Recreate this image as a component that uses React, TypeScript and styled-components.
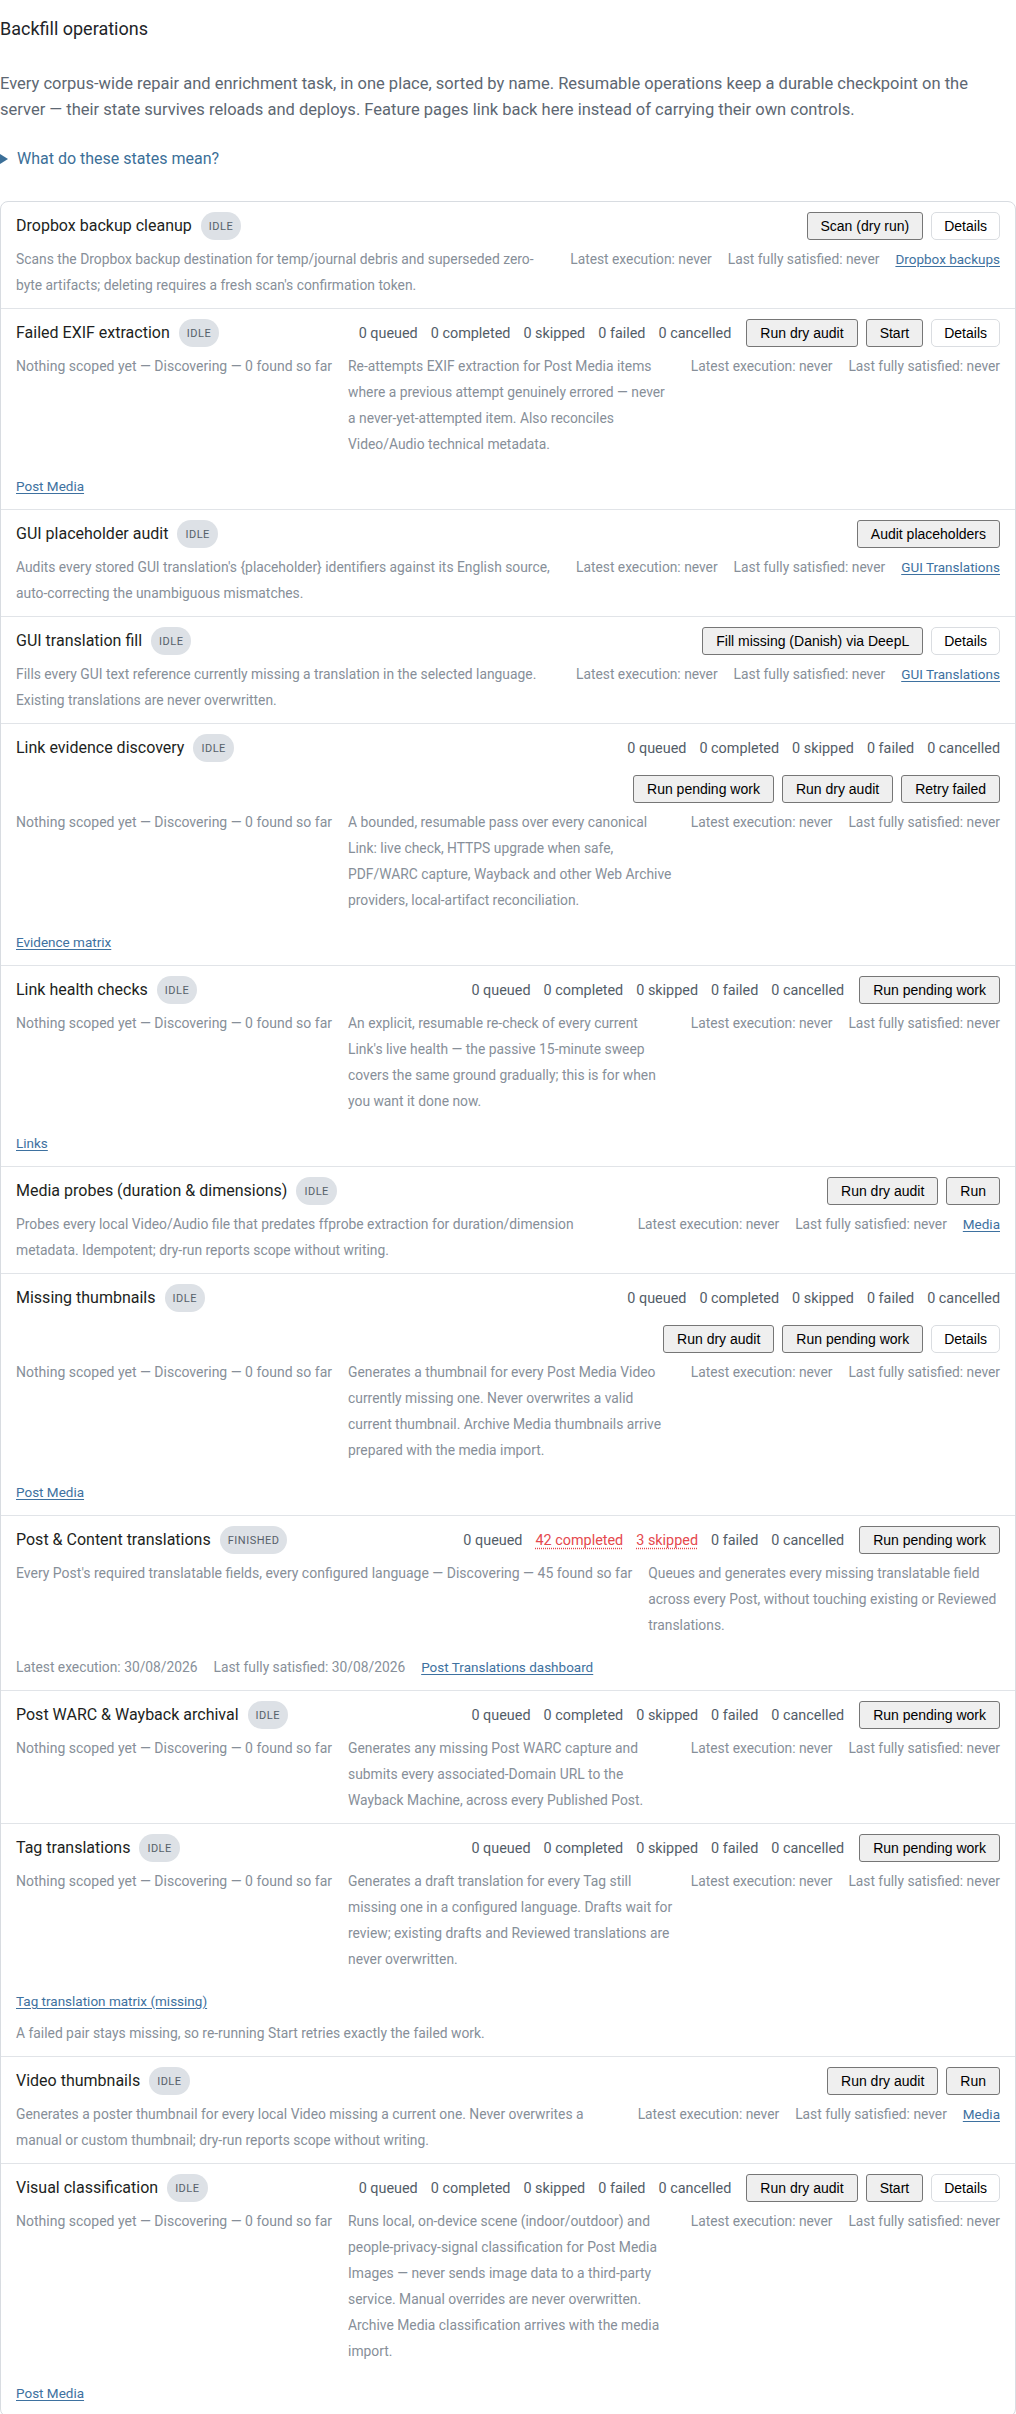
import React from "react";
import styled, { createGlobalStyle, css } from "styled-components";

type ButtonSpec = { label: string; variant?: "primary" | "secondary" };
type StatSpec = { label: string; alert?: boolean };

interface Operation {
  title: string;
  state: string;
  stats?: StatSpec[];
  buttons: ButtonSpec[];
  stacked?: boolean;
  scope?: string;
  description: string;
  latest: string;
  satisfied: string;
  link?: string;
  note?: string;
}

const zeroStats: StatSpec[] = [
  { label: "0 queued" },
  { label: "0 completed" },
  { label: "0 skipped" },
  { label: "0 failed" },
  { label: "0 cancelled" },
];

const nothingScoped = "Nothing scoped yet — Discovering — 0 found so far";

const operations: Operation[] = [
  {
    title: "Dropbox backup cleanup",
    state: "Idle",
    buttons: [{ label: "Scan (dry run)" }, { label: "Details", variant: "secondary" }],
    description:
      "Scans the Dropbox backup destination for temp/journal debris and superseded zero-byte artifacts; deleting requires a fresh scan's confirmation token.",
    latest: "never",
    satisfied: "never",
    link: "Dropbox backups",
  },
  {
    title: "Failed EXIF extraction",
    state: "Idle",
    stats: zeroStats,
    buttons: [{ label: "Run dry audit" }, { label: "Start" }, { label: "Details", variant: "secondary" }],
    scope: nothingScoped,
    description:
      "Re-attempts EXIF extraction for Post Media items where a previous attempt genuinely errored — never a never-yet-attempted item. Also reconciles Video/Audio technical metadata.",
    latest: "never",
    satisfied: "never",
    link: "Post Media",
  },
  {
    title: "GUI placeholder audit",
    state: "Idle",
    buttons: [{ label: "Audit placeholders" }],
    description:
      "Audits every stored GUI translation's {placeholder} identifiers against its English source, auto-correcting the unambiguous mismatches.",
    latest: "never",
    satisfied: "never",
    link: "GUI Translations",
  },
  {
    title: "GUI translation fill",
    state: "Idle",
    buttons: [{ label: "Fill missing (Danish) via DeepL" }, { label: "Details", variant: "secondary" }],
    description:
      "Fills every GUI text reference currently missing a translation in the selected language. Existing translations are never overwritten.",
    latest: "never",
    satisfied: "never",
    link: "GUI Translations",
  },
  {
    title: "Link evidence discovery",
    state: "Idle",
    stats: zeroStats,
    stacked: true,
    buttons: [{ label: "Run pending work" }, { label: "Run dry audit" }, { label: "Retry failed" }],
    scope: nothingScoped,
    description:
      "A bounded, resumable pass over every canonical Link: live check, HTTPS upgrade when safe, PDF/WARC capture, Wayback and other Web Archive providers, local-artifact reconciliation.",
    latest: "never",
    satisfied: "never",
    link: "Evidence matrix",
  },
  {
    title: "Link health checks",
    state: "Idle",
    stats: zeroStats,
    buttons: [{ label: "Run pending work" }],
    scope: nothingScoped,
    description:
      "An explicit, resumable re-check of every current Link's live health — the passive 15-minute sweep covers the same ground gradually; this is for when you want it done now.",
    latest: "never",
    satisfied: "never",
    link: "Links",
  },
  {
    title: "Media probes (duration & dimensions)",
    state: "Idle",
    buttons: [{ label: "Run dry audit" }, { label: "Run" }],
    description:
      "Probes every local Video/Audio file that predates ffprobe extraction for duration/dimension metadata. Idempotent; dry-run reports scope without writing.",
    latest: "never",
    satisfied: "never",
    link: "Media",
  },
  {
    title: "Missing thumbnails",
    state: "Idle",
    stats: zeroStats,
    stacked: true,
    buttons: [{ label: "Run dry audit" }, { label: "Run pending work" }, { label: "Details", variant: "secondary" }],
    scope: nothingScoped,
    description:
      "Generates a thumbnail for every Post Media Video currently missing one. Never overwrites a valid current thumbnail. Archive Media thumbnails arrive prepared with the media import.",
    latest: "never",
    satisfied: "never",
    link: "Post Media",
  },
  {
    title: "Post & Content translations",
    state: "Finished",
    stats: [
      { label: "0 queued" },
      { label: "42 completed", alert: true },
      { label: "3 skipped", alert: true },
      { label: "0 failed" },
      { label: "0 cancelled" },
    ],
    buttons: [{ label: "Run pending work" }],
    scope: "Every Post's required translatable fields, every configured language — Discovering — 45 found so far",
    description:
      "Queues and generates every missing translatable field across every Post, without touching existing or Reviewed translations.",
    latest: "30/08/2026",
    satisfied: "30/08/2026",
    link: "Post Translations dashboard",
  },
  {
    title: "Post WARC & Wayback archival",
    state: "Idle",
    stats: zeroStats,
    buttons: [{ label: "Run pending work" }],
    scope: nothingScoped,
    description:
      "Generates any missing Post WARC capture and submits every associated-Domain URL to the Wayback Machine, across every Published Post.",
    latest: "never",
    satisfied: "never",
  },
  {
    title: "Tag translations",
    state: "Idle",
    stats: zeroStats,
    buttons: [{ label: "Run pending work" }],
    scope: nothingScoped,
    description:
      "Generates a draft translation for every Tag still missing one in a configured language. Drafts wait for review; existing drafts and Reviewed translations are never overwritten.",
    latest: "never",
    satisfied: "never",
    link: "Tag translation matrix (missing)",
    note: "A failed pair stays missing, so re-running Start retries exactly the failed work.",
  },
  {
    title: "Video thumbnails",
    state: "Idle",
    buttons: [{ label: "Run dry audit" }, { label: "Run" }],
    description:
      "Generates a poster thumbnail for every local Video missing a current one. Never overwrites a manual or custom thumbnail; dry-run reports scope without writing.",
    latest: "never",
    satisfied: "never",
    link: "Media",
  },
  {
    title: "Visual classification",
    state: "Idle",
    stats: zeroStats,
    buttons: [{ label: "Run dry audit" }, { label: "Start" }, { label: "Details", variant: "secondary" }],
    scope: nothingScoped,
    description:
      "Runs local, on-device scene (indoor/outdoor) and people-privacy-signal classification for Post Media Images — never sends image data to a third-party service. Manual overrides are never overwritten. Archive Media classification arrives with the media import.",
    latest: "never",
    satisfied: "never",
    link: "Post Media",
  },
];

const GlobalStyle = createGlobalStyle`
  * { box-sizing: border-box; }
  body {
    margin: 0;
    background: #ffffff;
    color: #1f2328;
    font-family: Roboto, "Liberation Sans", Arial, sans-serif;
  }
`;

const Page = styled.main`
  display: flex;
  flex-direction: column;
`;

const Heading = styled.h1`
  margin: 18px 0 32px;
  font-size: 18px;
  line-height: 21px;
  font-weight: 400;
  color: #222428;
`;

const Intro = styled.p`
  margin: 0 0 24px;
  font-size: 16.5px;
  line-height: 26px;
  color: #5d6772;
`;

const Legend = styled.details`
  margin: 0 0 30px;
`;

const LegendSummary = styled.summary`
  list-style: none;
  display: flex;
  align-items: center;
  gap: 9px;
  font-size: 16px;
  line-height: 24px;
  color: #3b6f98;
  cursor: pointer;

  &::-webkit-details-marker {
    display: none;
  }

  &::before {
    content: "";
    width: 0;
    height: 0;
    border-top: 5px solid transparent;
    border-bottom: 5px solid transparent;
    border-left: 8px solid currentColor;
  }
`;

const OpsList = styled.section`
  border: 1px solid #d8dce1;
  border-radius: 8px;
  overflow: hidden;
`;

const OpRow = styled.article`
  padding: 10px 15px;

  & + & {
    border-top: 1px solid #e1e4e8;
  }
`;

const OpHeader = styled.div`
  display: flex;
  justify-content: space-between;
  align-items: flex-start;
  gap: 16px;
`;

const TitleGroup = styled.div`
  display: flex;
  align-items: center;
  gap: 9px;
  height: 28px;
  flex: none;
`;

const OpTitle = styled.h2`
  margin: 0;
  font-size: 16px;
  font-weight: 400;
  line-height: 28px;
  color: #1d1f22;
  white-space: nowrap;
`;

const StateBadge = styled.span`
  display: inline-flex;
  align-items: center;
  height: 28px;
  padding: 0 8px;
  border-radius: 14px;
  background: #dde1e6;
  color: #56606a;
  font-size: 11px;
  letter-spacing: 0.5px;
  text-transform: uppercase;
`;

const Actions = styled.div<{ $stacked?: boolean }>`
  display: flex;
  align-items: center;
  justify-content: flex-end;
  gap: 15px;

  ${(p) =>
    p.$stacked &&
    css`
      flex-direction: column;
      align-items: flex-end;
      gap: 13px;
    `}
`;

const Stats = styled.div`
  display: flex;
  align-items: center;
  gap: 13px;
  height: 28px;
  font-size: 14.4px;
  color: #535d68;
  white-space: nowrap;
`;

const Stat = styled.span<{ $alert?: boolean }>`
  ${(p) =>
    p.$alert &&
    css`
      color: #e5484d;
      text-decoration: underline dotted;
      text-underline-offset: 3px;
    `}
`;

const Buttons = styled.div`
  display: flex;
  gap: 8px;
`;

const ActionButton = styled.button<{ $variant?: "primary" | "secondary" }>`
  height: 28px;
  padding: 0 13px;
  font-family: "Liberation Sans", Arial, sans-serif;
  font-size: 14px;
  color: #000;
  background: #efefef;
  border: 1px solid #767676;
  border-radius: 3px;
  white-space: nowrap;
  cursor: pointer;

  ${(p) =>
    p.$variant === "secondary" &&
    css`
      padding: 0 12px;
      background: #ffffff;
      border-color: #dadde1;
      border-radius: 5px;
    `}
`;

const OpBody = styled.div`
  display: flex;
  flex-wrap: wrap;
  gap: 16px;
  margin-top: 6px;
  line-height: 26px;
  color: #878f99;
`;

const Scope = styled.span`
  flex: none;
  font-size: 14px;
  white-space: nowrap;
`;

const Desc = styled.p`
  margin: 0;
  flex: 1 1 320px;
  font-size: 13.85px;
`;

const Meta = styled.span`
  flex: none;
  font-size: 13.8px;
  white-space: nowrap;
`;

const OpLink = styled.a`
  flex: none;
  font-size: 13.5px;
  color: #3e71a0;
  text-decoration: underline;
  text-underline-offset: 2px;
`;

const Note = styled.p`
  margin: 6px 0 0;
  font-size: 13.85px;
  line-height: 26px;
  color: #878f99;
`;

function OperationRow({ op }: { op: Operation }) {
  return (
    <OpRow>
      <OpHeader>
        <TitleGroup>
          <OpTitle>{op.title}</OpTitle>
          <StateBadge>{op.state}</StateBadge>
        </TitleGroup>
        <Actions $stacked={op.stacked}>
          {op.stats && (
            <Stats>
              {op.stats.map((s) => (
                <Stat key={s.label} $alert={s.alert}>
                  {s.label}
                </Stat>
              ))}
            </Stats>
          )}
          <Buttons>
            {op.buttons.map((b) => (
              <ActionButton key={b.label} type="button" $variant={b.variant}>
                {b.label}
              </ActionButton>
            ))}
          </Buttons>
        </Actions>
      </OpHeader>
      <OpBody>
        {op.scope && <Scope>{op.scope}</Scope>}
        <Desc>{op.description}</Desc>
        <Meta>Latest execution: {op.latest}</Meta>
        <Meta>Last fully satisfied: {op.satisfied}</Meta>
        {op.link && <OpLink href="#">{op.link}</OpLink>}
      </OpBody>
      {op.note && <Note>{op.note}</Note>}
    </OpRow>
  );
}

export default function App() {
  return (
    <Page>
      <GlobalStyle />
      <Heading>Backfill operations</Heading>
      <Intro>
        Every corpus-wide repair and enrichment task, in one place, sorted by name. Resumable operations keep a
        durable checkpoint on the server — their state survives reloads and deploys. Feature pages link back here
        instead of carrying their own controls.
      </Intro>
      <Legend>
        <LegendSummary>What do these states mean?</LegendSummary>
      </Legend>
      <OpsList>
        {operations.map((op) => (
          <OperationRow key={op.title} op={op} />
        ))}
      </OpsList>
    </Page>
  );
}
